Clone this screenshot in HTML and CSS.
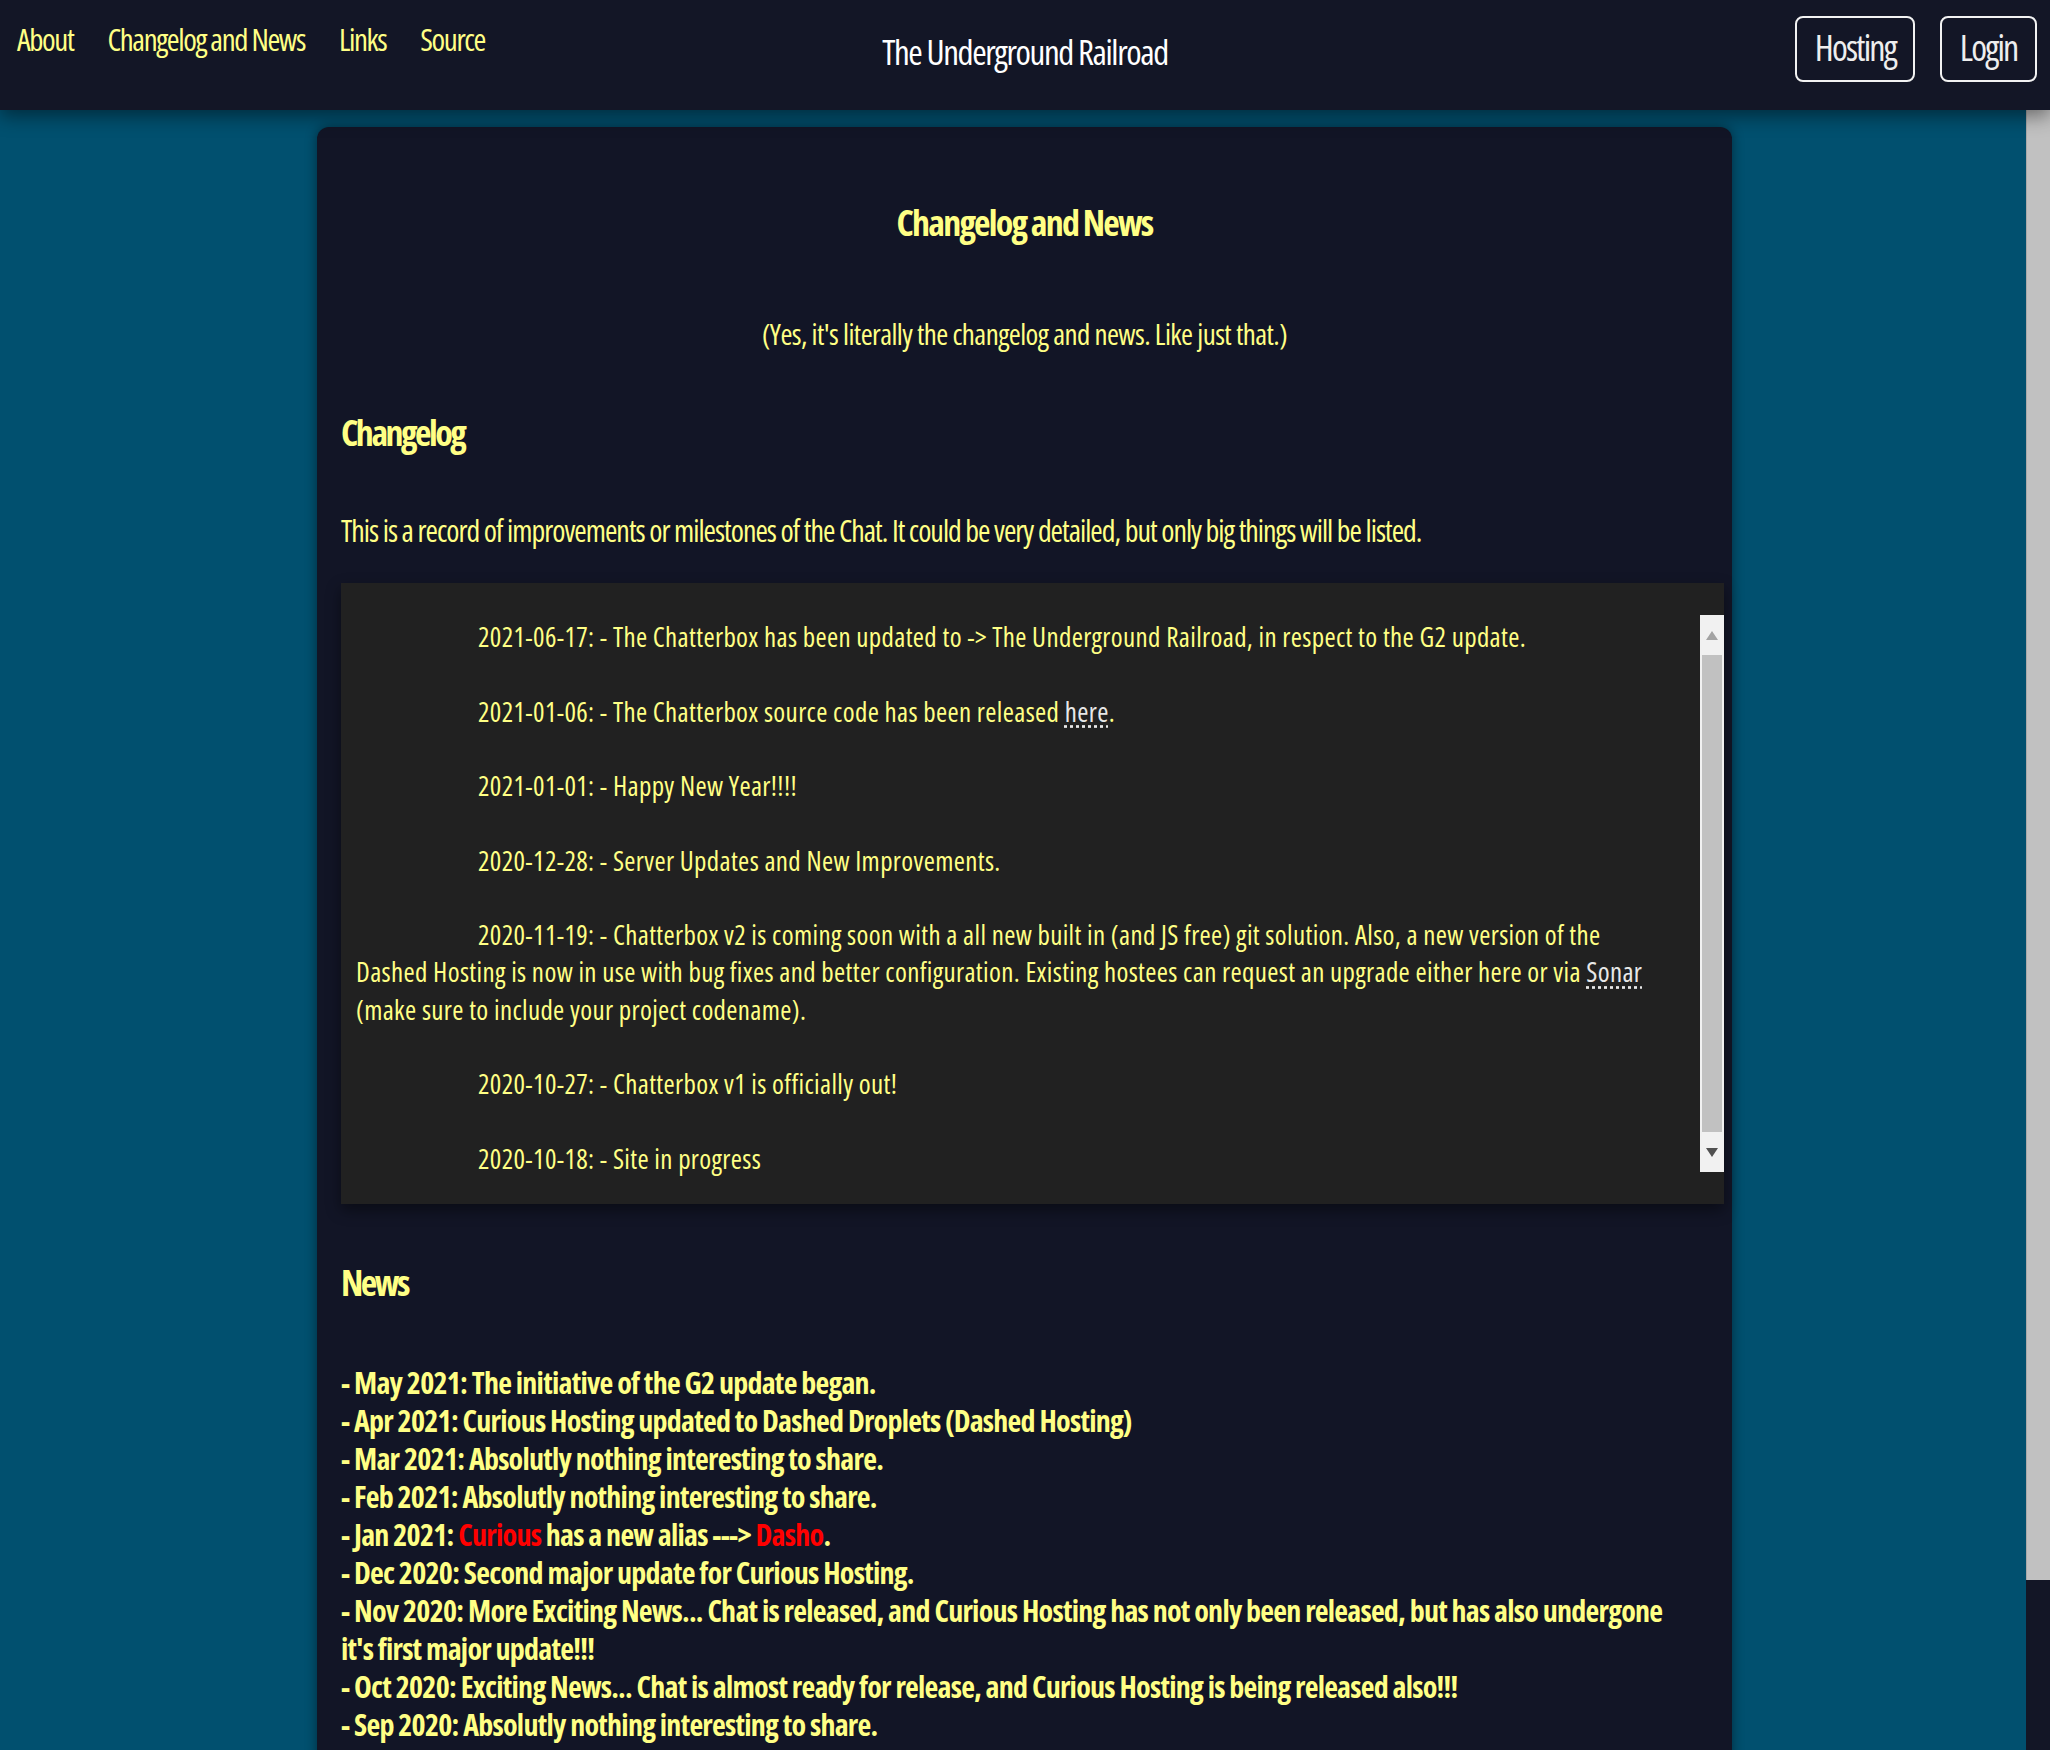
FILE: index.html
```html
<!DOCTYPE html>
<html lang="en">
<head>
<meta charset="utf-8">
<title>Changelog and News - The Underground Railroad</title>
<link rel="stylesheet" href="styles.css">
</head>
<body>
<header class="topbar">
  <nav class="nav">
    <a href="#">About</a>
    <a href="#">Changelog and News</a>
    <a href="#">Links</a>
    <a href="#">Source</a>
  </nav>
  <div class="brand">The Underground Railroad</div>
  <div class="actions">
    <a class="btn" href="#">Hosting</a>
    <a class="btn" href="#">Login</a>
  </div>
</header>
<div class="page">
  <main class="page-content">
    <article class="card">
      <h1 class="card-title">Changelog and News</h1>
      <p class="subtitle">(Yes, it's literally the changelog and news. Like just that.)</p>
      <h2 class="section-title">Changelog</h2>
      <p class="lead">This is a record of improvements or milestones of the Chat. It could be very detailed, but only big things will be listed.</p>
      <div class="log-box">
        <div class="log-text">
          <p class="log-entry">2021-06-17: - The Chatterbox has been updated to -&gt; The Underground Railroad, in respect to the G2 update.</p>
          <p class="log-entry">2021-01-06: - The Chatterbox source code has been released <a class="log-link" href="#">here</a>.</p>
          <p class="log-entry">2021-01-01: - Happy New Year!!!!</p>
          <p class="log-entry">2020-12-28: - Server Updates and New Improvements.</p>
          <p class="log-entry">2020-11-19: - Chatterbox v2 is coming soon with a all new built in (and JS free) git solution. Also, a new version of the<br>Dashed Hosting is now in use with bug fixes and better configuration. Existing hostees can request an upgrade either here or via <a class="log-link" href="#">Sonar</a><br>(make sure to include your project codename).</p>
          <p class="log-entry">2020-10-27: - Chatterbox v1 is officially out!</p>
          <p class="log-entry">2020-10-18: - Site in progress</p>
        </div>
        <div class="log-rail" aria-hidden="true">
          <span class="rail-btn">
            <svg width="12" height="9" viewBox="0 0 12 9"><path d="M0 9 L6 0 L12 9 Z" fill="#a3a3a3"/></svg>
          </span>
          <span class="rail-thumb"></span>
          <span class="rail-btn">
            <svg width="12" height="9" viewBox="0 0 12 9"><path d="M0 0 L6 9 L12 0 Z" fill="#505050"/></svg>
          </span>
        </div>
      </div>
      <h2 class="section-title section-news">News</h2>
      <p class="news">
        - May 2021: The initiative of the G2 update began.<br>
        - Apr 2021: Curious Hosting updated to Dashed Droplets (Dashed Hosting)<br>
        - Mar 2021: Absolutly nothing interesting to share.<br>
        - Feb 2021: Absolutly nothing interesting to share.<br>
        - Jan 2021: <span class="hl">Curious</span> has a new alias ---&gt; <span class="hl">Dasho</span>.<br>
        - Dec 2020: Second major update for Curious Hosting.<br>
        - Nov 2020: More Exciting News... Chat is released, and Curious Hosting has not only been released, but has also undergone<br>it's first major update!!!<br>
        - Oct 2020: Exciting News... Chat is almost ready for release, and Curious Hosting is being released also!!!<br>
        - Sep 2020: Absolutly nothing interesting to share.
      </p>
    </article>
  </main>
  <div class="page-rail" aria-hidden="true"><span class="page-thumb"></span></div>
</div>
</body>
</html>
```
FILE: styles.css
```css
html, body {
  margin: 0;
  height: 100%;
}

body {
  display: flex;
  flex-direction: column;
  height: 100vh;
  overflow: hidden;
  background: #01506f;
  color: #ffff85;
  font-family: "Open Sans", "Liberation Sans", sans-serif;
  font-stretch: 75%;
}

/* ---------- top bar ---------- */
.topbar {
  flex: 0 0 110px;
  display: grid;
  grid-template-columns: 1fr auto 1fr;
  align-items: start;
  background: #131626;
  box-shadow: 0 6px 18px rgba(0, 0, 0, 0.45);
  position: relative;
  z-index: 2;
}

.nav {
  display: flex;
  gap: 34px;
  padding: 20px 0 0 17px;
}

.nav a {
  color: #ffff85;
  text-decoration: none;
  font-size: 31px;
  line-height: 38px;
  letter-spacing: -0.045em;
}

.brand {
  padding-top: 31px;
  color: #ffffff;
  font-size: 35px;
  line-height: 42px;
  letter-spacing: -0.04em;
}

.actions {
  display: flex;
  justify-content: flex-end;
  gap: 25px;
  padding: 16px 13px 0 0;
}

.btn {
  display: block;
  height: 62px;
  padding: 0 17.5px;
  border: 2px solid #f2f2f2;
  border-radius: 8px;
  color: #eeeeee;
  text-decoration: none;
  font-size: 36px;
  line-height: 60px;
  letter-spacing: -0.05em;
}

/* ---------- page ---------- */
.page {
  flex: 1 1 auto;
  display: flex;
  min-height: 0;
}

.page-content {
  flex: 1 1 auto;
  min-width: 0;
  overflow: hidden;
}

.page-rail {
  flex: 0 0 24px;
  display: flex;
  flex-direction: column;
  background: #131626;
}

.page-thumb {
  display: block;
  height: 1470px;
  background: #c1c1c1;
  border-left: 1px solid #a9a9a9;
}

.card {
  box-sizing: border-box;
  width: 1415px;
  margin: 17px 0 20px 317px;
  padding: 74px 24px 176px;
  background: #121526;
  border-radius: 12px;
  box-shadow: 0 0 12px rgba(0, 0, 0, 0.45);
}

.card-title {
  margin: 0;
  text-align: center;
  font-size: 36px;
  line-height: 44px;
  font-weight: 700;
  letter-spacing: -0.05em;
}

.subtitle {
  margin: 71px 0 0;
  text-align: center;
  font-size: 29px;
  line-height: 36px;
  letter-spacing: -0.02em;
}

.section-title {
  margin: 59px 0 0;
  font-size: 36px;
  line-height: 44px;
  font-weight: 700;
  letter-spacing: -0.07em;
}

.section-news {
  margin-top: 57px;
}

.lead {
  margin: 57px 0 0;
  font-size: 30px;
  line-height: 38px;
  letter-spacing: -0.033em;
}

/* ---------- changelog box ---------- */
.log-box {
  display: flex;
  margin: 33px -16px 0 0;
  padding: 32px 0 27px;
  background: #212121;
  box-shadow: 0 6px 14px rgba(0, 0, 0, 0.45);
}

.log-text {
  flex: 1 1 auto;
  min-width: 0;
  padding: 3px 15px 0;
  overflow: hidden;
}

.log-entry {
  margin: 0 0 37.25px;
  text-indent: 122px;
  white-space: nowrap;
  font-size: 27px;
  line-height: 37.25px;
  letter-spacing: 0.35px;
}

.log-entry:last-child {
  margin-bottom: 0;
}

.log-link {
  color: #e8e8e8;
  text-decoration: underline dotted;
  text-underline-offset: 4px;
}

.log-rail {
  flex: 0 0 24px;
  align-self: flex-start;
  height: 557px;
  display: flex;
  flex-direction: column;
  background: #f1f1f1;
}

.rail-btn {
  flex: 0 0 40px;
  display: flex;
  align-items: center;
  justify-content: center;
}

.rail-thumb {
  flex: 1 1 auto;
  margin: 0 2px;
  background: #c1c1c1;
}

/* ---------- news ---------- */
.news {
  margin: 59px 0 0;
  font-size: 30px;
  line-height: 38px;
  font-weight: 700;
  letter-spacing: -0.75px;
}

.hl {
  color: #ff0000;
}
```
